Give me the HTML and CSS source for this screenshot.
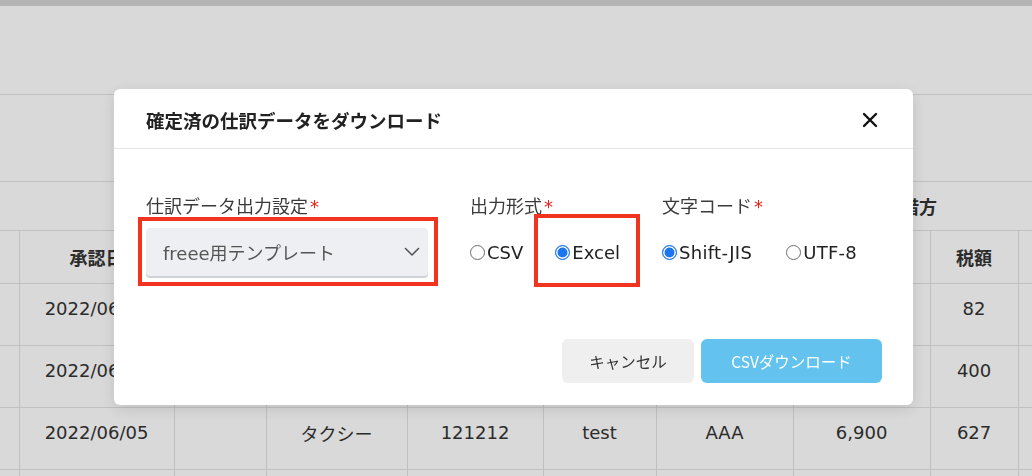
FILE: index.html
```html
<!DOCTYPE html>
<html lang="ja">
<head>
    <meta charset="UTF-8">
    <meta name="viewport" content="width=device-width, initial-scale=1.0">
    <title>仕訳データ一覧</title>
    <link rel="stylesheet" href="styles.css">
</head>
<body>
    <div class="page">
        <div class="topbar"></div>
        <header class="page-head"></header>
        <div class="toolbar"></div>

        <table class="journal">
            <colgroup>
                <col style="width: 19px">
                <col style="width: 155px">
                <col style="width: 92px">
                <col style="width: 141px">
                <col style="width: 136px">
                <col style="width: 113px">
                <col style="width: 137px">
                <col style="width: 137px">
                <col style="width: 88px">
                <col style="width: 27px">
            </colgroup>
            <thead>
                <tr class="group-row">
                    <th colspan="7"></th>
                    <th colspan="3">借方</th>
                </tr>
                <tr class="head-row">
                    <th></th>
                    <th>承認日</th>
                    <th></th>
                    <th></th>
                    <th></th>
                    <th></th>
                    <th></th>
                    <th></th>
                    <th>税額</th>
                    <th></th>
                </tr>
            </thead>
            <tbody>
                <tr>
                    <td></td>
                    <td>2022/06/05</td>
                    <td></td>
                    <td></td>
                    <td></td>
                    <td></td>
                    <td></td>
                    <td></td>
                    <td>82</td>
                    <td></td>
                </tr>
                <tr>
                    <td></td>
                    <td>2022/06/05</td>
                    <td></td>
                    <td></td>
                    <td></td>
                    <td></td>
                    <td></td>
                    <td></td>
                    <td>400</td>
                    <td></td>
                </tr>
                <tr>
                    <td></td>
                    <td>2022/06/05</td>
                    <td></td>
                    <td>タクシー</td>
                    <td>121212</td>
                    <td>test</td>
                    <td>AAA</td>
                    <td>6,900</td>
                    <td>627</td>
                    <td></td>
                </tr>
                <tr>
                    <td></td>
                    <td></td>
                    <td></td>
                    <td></td>
                    <td></td>
                    <td></td>
                    <td></td>
                    <td></td>
                    <td></td>
                    <td></td>
                </tr>
            </tbody>
        </table>
    </div>

    <div class="overlay"></div>

    <div class="modal">
        <div class="modal-header">
            <h2 class="modal-title">確定済の仕訳データをダウンロード</h2>
            <button class="close-btn" type="button">
                <svg width="16" height="16" viewBox="0 0 16 16">
                    <path d="M2 2 L14 14 M14 2 L2 14" stroke="#111" stroke-width="2.4" stroke-linecap="round" fill="none"/>
                </svg>
            </button>
        </div>

        <div class="modal-body">
            <div class="field field-template">
                <label class="field-label">仕訳データ出力設定<span class="req">*</span></label>
                <div class="field-control">
                    <div class="select">
                        <span>freee用テンプレート</span>
                        <svg width="16" height="10" viewBox="0 0 16 10">
                            <polyline points="1.5,1.5 8,8 14.5,1.5" stroke="#555" stroke-width="1.6" fill="none" stroke-linecap="round" stroke-linejoin="round"/>
                        </svg>
                    </div>
                    <span class="mark mark-select"></span>
                </div>
            </div>

            <div class="field field-format">
                <label class="field-label">出力形式<span class="req">*</span></label>
                <div class="field-control">
                    <label class="radio"><input type="radio" name="format">CSV</label>
                    <label class="radio"><input type="radio" name="format" checked>Excel<span class="mark mark-radio"></span></label>
                </div>
            </div>

            <div class="field field-encoding">
                <label class="field-label">文字コード<span class="req">*</span></label>
                <div class="field-control">
                    <label class="radio"><input type="radio" name="encoding" checked>Shift-JIS</label>
                    <label class="radio"><input type="radio" name="encoding">UTF-8</label>
                </div>
            </div>
        </div>

        <div class="modal-footer">
            <button class="btn btn-cancel" type="button">キャンセル</button>
            <button class="btn btn-download" type="button">CSVダウンロード</button>
        </div>
    </div>
</body>
</html>
```

FILE: styles.css
```css
* {
    margin: 0;
    padding: 0;
    box-sizing: border-box;
}

body {
    font-family: "DejaVu Sans", "Noto Sans CJK JP", sans-serif;
    color: #333;
    background: #fff;
    width: 1032px;
    height: 476px;
    overflow: hidden;
}

/* page behind the dialog */
.topbar {
    height: 6px;
    background: #d4d4d4;
}

.page-head {
    height: 89px;
    border-bottom: 1px solid #e2e2e2;
}

.toolbar {
    height: 86px;
}

.journal {
    border-collapse: collapse;
    table-layout: fixed;
    width: 1045px;
}

.journal th,
.journal td {
    border: 1px solid #e2e2e2;
    text-align: center;
    font-size: 18px;
    white-space: nowrap;
    overflow: hidden;
}

.journal tr > :first-child {
    border-left: none;
}

.journal th {
    font-family: "Noto Sans CJK JP", sans-serif;
    font-weight: 700;
    color: #333;
}

.group-row th {
    height: 49px;
}

.head-row th {
    height: 53px;
}

.journal td {
    height: 62px;
    padding-bottom: 12px;
}

/* dialog */
.overlay {
    position: fixed;
    inset: 0;
    background: rgba(0, 0, 0, 0.15);
}

.modal {
    position: fixed;
    left: 114px;
    top: 89px;
    width: 799px;
    background: #fff;
    border-radius: 6px;
    box-shadow: 0 4px 16px rgba(0, 0, 0, 0.12);
}

.modal-header {
    height: 60px;
    display: flex;
    align-items: center;
    justify-content: space-between;
    padding: 2px 35px 0 32px;
    border-bottom: 1px solid #e6e6e6;
}

.modal-title {
    font-family: "Noto Sans CJK JP", sans-serif;
    font-size: 18.5px;
    font-weight: 700;
    color: #222;
}

.close-btn {
    border: none;
    background: none;
    width: 16px;
    height: 16px;
    display: flex;
}

.modal-body {
    display: flex;
    gap: 42px;
    padding: 45px 32px 0;
}

.field-label {
    display: block;
    font-size: 18px;
    line-height: 26px;
    margin-bottom: 8px;
    color: #3a3a3a;
}

.req {
    color: #e3261c;
    margin-left: 2px;
}

.field-control {
    height: 48px;
    display: flex;
    align-items: center;
    position: relative;
}

.field-template {
    width: 282px;
}

.field-format {
    width: 150px;
}

.select {
    width: 100%;
    height: 48px;
    background: #edeff2;
    border-radius: 4px;
    box-shadow: 0 2px 0 #cfd2d7;
    display: flex;
    align-items: center;
    justify-content: space-between;
    padding: 0 8px 0 17px;
    color: #555;
    font-size: 18px;
}

.radio {
    display: flex;
    align-items: center;
    align-self: stretch;
    position: relative;
    font-size: 18px;
    color: #222;
}

.radio + .radio {
    margin-left: 32px;
}

.field-encoding .radio {
    letter-spacing: 0.3px;
}

.field-encoding .radio + .radio {
    margin-left: 34px;
}

.radio input {
    appearance: none;
    width: 15px;
    height: 15px;
    border: 1px solid #6b6b6b;
    border-radius: 50%;
    margin-right: 2px;
}

.radio input:checked {
    border: 1.5px solid #1c76ee;
    background: #1c76ee;
    box-shadow: inset 0 0 0 1.5px #fff;
}

/* red annotation frames */
.mark {
    position: absolute;
    border: 4px solid #f1341f;
    pointer-events: none;
}

.mark-select {
    top: -11px;
    left: -8px;
    right: -10px;
    bottom: -10px;
}

.mark-radio {
    top: -14px;
    left: -21px;
    right: -20px;
    bottom: -11px;
}

.modal-footer {
    display: flex;
    justify-content: flex-end;
    gap: 7px;
    padding: 63px 31px 22px;
}

.btn {
    height: 44px;
    border: none;
    border-radius: 6px;
    font-family: "Noto Sans CJK JP", sans-serif;
    font-size: 15.5px;
}

.btn-cancel {
    width: 132px;
    background: #efefef;
    color: #333;
}

.btn-download {
    width: 181px;
    background: #63c3ee;
    color: #fff;
}
```
